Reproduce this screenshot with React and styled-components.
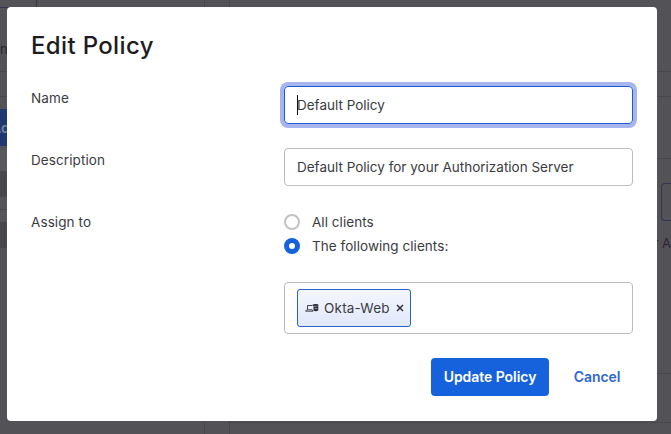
import React from "react";
import styled, { createGlobalStyle } from "styled-components";

const GlobalStyle = createGlobalStyle`
  * { box-sizing: border-box; }
  body {
    margin: 0;
    overflow: hidden;
    background: #535257;
    color: #3b3b42;
    font-family: Inter, "Liberation Sans", sans-serif;
    font-size: 14px;
  }
`;

const Screen = styled.div`
  position: relative;
  width: 671px;
  height: 434px;
  overflow: hidden;
`;

const Page = styled.div`
  display: grid;
  grid-template-columns: 205px 24px 1fr;
  height: 434px;
`;

const SideColumn = styled.div`
  display: flex;
  flex-direction: column;
  border-right: 1px solid #48474c;
`;

const MainColumn = styled.div`
  display: flex;
  flex-direction: column;
  border-left: 1px solid #48474c;
`;

const Band = styled.div`
  flex: none;
  display: flex;
  align-items: center;
  height: ${(p) => p.$h}px;
  background: ${(p) => p.$bg || "transparent"};
  border-bottom: ${(p) => (p.$line ? "1px solid #48474c" : "0")};
  justify-content: ${(p) => (p.$end ? "flex-end" : "flex-start")};
`;

const PageTab = styled.div`
  width: 37px;
  height: 8px;
  border: solid #34354c;
  border-width: 0 1px 1px 0;
  border-radius: 0 0 2px 0;
`;

const PageText = styled.span`
  color: #28272d;
  font-size: 13px;
  line-height: 18px;
  white-space: nowrap;
  padding-top: ${(p) => p.$drop || 0}px;
`;

const PageButton = styled.div`
  width: 80px;
  height: 37px;
  line-height: 37px;
  text-indent: -9px;
  background: #1f396f;
  color: #74809d;
  font-weight: 600;
`;

const PageField = styled.div`
  width: 10px;
  height: 38px;
  border: 1px solid #313650;
  border-right: 0;
  border-radius: 4px 0 0 4px;
`;

const Modal = styled.form`
  position: absolute;
  left: 7px;
  top: 7px;
  width: 650px;
  height: 414px;
  padding: 23px 24px 0;
  border-radius: 4px;
  background: #fff;
`;

const Title = styled.h1`
  margin: 0;
  height: 56px;
  line-height: 31px;
  font-size: 24px;
  font-weight: 500;
  letter-spacing: 0.35px;
  color: #1d1d21;
`;

const Row = styled.div`
  display: grid;
  grid-template-columns: 253px 349px;
  height: ${(p) => p.$h}px;
`;

const Label = styled.div`
  line-height: 24px;
  font-size: 13.5px;
  letter-spacing: 0.1px;
`;

const Field = styled.div`
  display: flex;
  align-items: center;
  height: 38px;
  padding-left: 12px;
  font-size: 13.5px;
  letter-spacing: 0;
  border: 1px solid ${(p) => (p.$focus ? "#1c5ad0" : "#bcbcc2")};
  border-radius: 4px;
  box-shadow: ${(p) => (p.$focus ? "0 0 0 4px #a7b5ee" : "none")};
`;

const Caret = styled.span`
  width: 1px;
  height: 20px;
  margin-right: -1px;
  background: #111;
`;

const Option = styled.div`
  display: flex;
  align-items: center;
  height: 24px;
  gap: 12px;
  font-size: 13.5px;
  letter-spacing: 0.05px;
`;

const Radio = styled.span`
  width: 16px;
  height: 16px;
  border-radius: 50%;
  background: #fff;
  border: ${(p) => (p.$checked ? "5px solid #1662dd" : "2px solid #c1c1c6")};
`;

const TokenBox = styled.div`
  display: flex;
  align-items: center;
  height: 52px;
  padding-left: 12px;
  border: 1px solid #bcbcc2;
  border-radius: 4px;
`;

const Token = styled.span`
  display: flex;
  align-items: center;
  width: 114px;
  height: 38px;
  padding-left: 7px;
  border: 1px solid #2861c4;
  border-radius: 3px;
  background: linear-gradient(#f4f6fd, #e1e8fb);
  letter-spacing: 0.2px;
  font-size: 13.5px;
`;

const TokenName = styled.span`
  width: 66px;
  margin: 0 6px 0 5px;
  white-space: nowrap;
`;

const Footer = styled.div`
  display: flex;
  justify-content: flex-end;
  font-size: 14px;
  font-weight: 600;
  letter-spacing: -0.05px;
  line-height: 38px;
  text-align: center;
  white-space: nowrap;
`;

const Primary = styled.div`
  width: 118px;
  height: 38px;
  border-radius: 4px;
  background: #1662dd;
  color: #fff;
`;

const Cancel = styled.div`
  width: 72px;
  margin-left: 12px;
  color: #2e68cb;
`;

const ClientIcon = () => (
  <svg width="14" height="10" viewBox="0 0 14 10">
    <path d="M2.5 6.8V2.5H7.5M0.5 8.2L1.8 6.8H7.2L8 8.2Z" fill="none" stroke="#45454d" />
    <path d="M7.5 1.8C8 .8 12.5 .6 13.3 1.5V7.2C12.6 8.3 9.5 8.5 8.5 7.8V3.2Z" fill="#303036" />
    <path d="M8.8 3.3H12.4M9.5 5.5H12.4" stroke="#b9c0d0" strokeWidth=".6" />
  </svg>
);

const CloseIcon = () => (
  <svg width="8" height="8" viewBox="0 0 8 8">
    <path d="M1 1L7 7M7 1L1 7" stroke="#303036" strokeWidth="1.5" />
  </svg>
);

export default function App() {
  return (
    <>
      <GlobalStyle />
      <Screen>
        <Page>
          <SideColumn>
            <Band $h={8}><PageTab /></Band>
            <Band $h={64} $line><PageText $drop={18}>n</PageText></Band>
            <Band $h={25} $line />
            <Band $h={12} />
            <PageButton>Add</PageButton>
            <Band $h={4} />
            <Band $h={21} $bg="#59585d" />
            <Band $h={26} $bg="#48474c" />
            <Band $h={13} $bg="#555459" $line />
            <Band $h={12} $bg="#555459" />
            <Band $h={26} $bg="#48474c" />
          </SideColumn>
          <div />
          <MainColumn>
            <Band $h={72} $line />
            <Band $h={25} $line />
            <Band $h={62} $line />
            <Band $h={24} />
            <Band $h={38} $end><PageField /></Band>
            <Band $h={44} $end><PageText>r A</PageText></Band>
            <Band $h={109} $line />
            <Band $h={49} $line />
          </MainColumn>
        </Page>
        <Modal>
          <Title>Edit Policy</Title>
          <Row $h={62}>
            <Label>Name</Label>
            <Field $focus><Caret />Default Policy</Field>
          </Row>
          <Row $h={62}>
            <Label>Description</Label>
            <Field>Default Policy for your Authorization Server</Field>
          </Row>
          <Row $h={72}>
            <Label>Assign to</Label>
            <div>
              <Option><Radio />All clients</Option>
              <Option><Radio $checked />The following clients:</Option>
            </div>
          </Row>
          <Row $h={76}>
            <span />
            <TokenBox>
              <Token>
                <ClientIcon />
                <TokenName>Okta-Web</TokenName>
                <CloseIcon />
              </Token>
            </TokenBox>
          </Row>
          <Footer>
            <Primary>Update Policy</Primary>
            <Cancel>Cancel</Cancel>
          </Footer>
        </Modal>
      </Screen>
    </>
  );
}
